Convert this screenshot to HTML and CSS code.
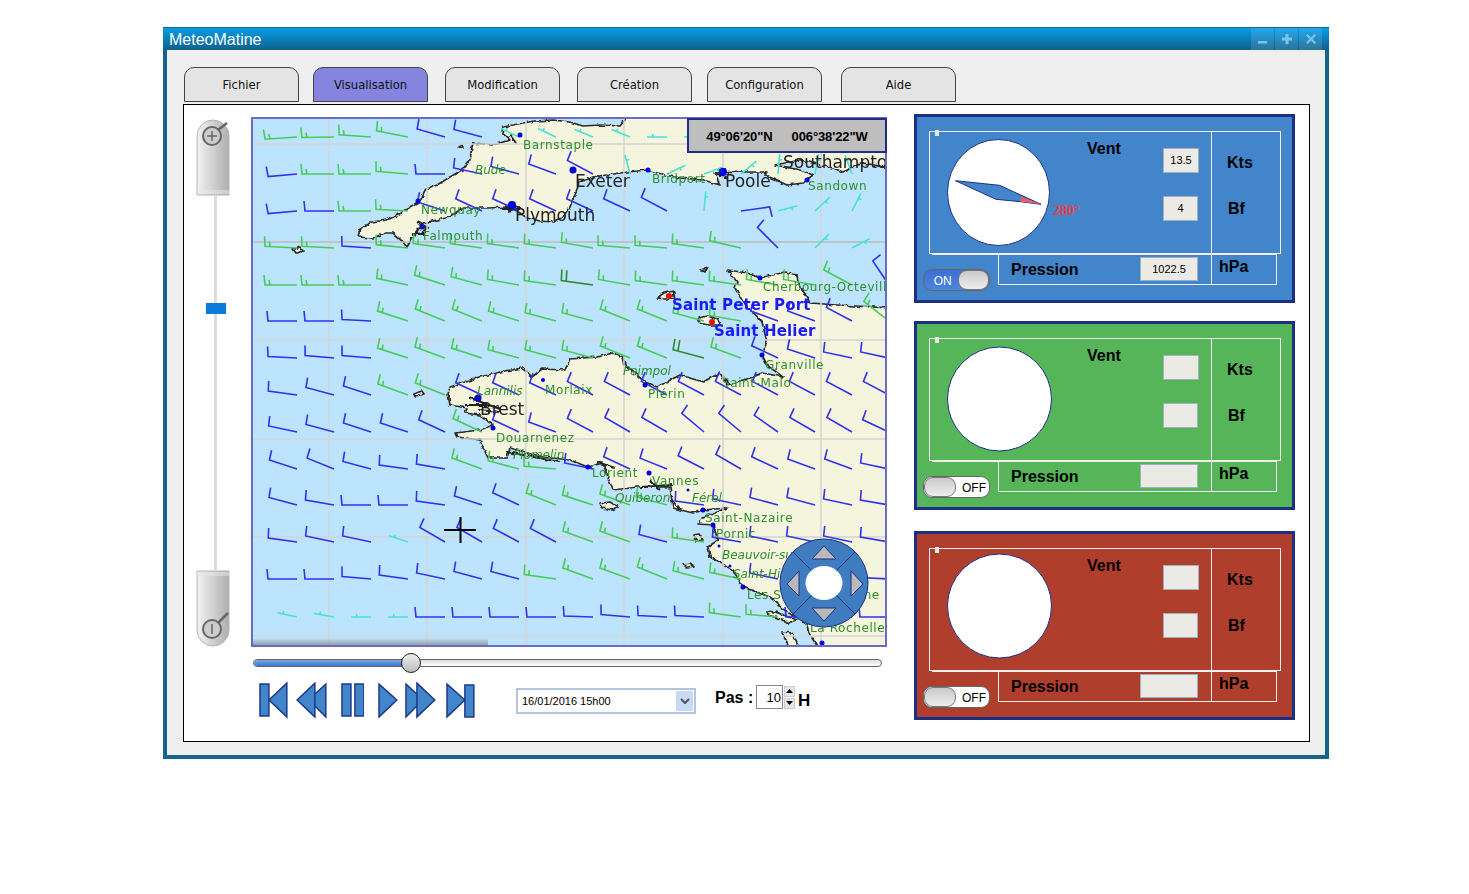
FILE: index.html
```html
<!DOCTYPE html>
<html lang="fr">
<head>
  <meta charset="UTF-8">
  <title>MeteoMatine</title>
  <link rel="stylesheet" href="styles.css">
</head>
<body>
  <div class="window">
    <div class="titlebar">
      <span class="title">MeteoMatine</span>
      <div class="win-buttons">
        <div class="win-btn"><svg width="12" height="12" viewBox="0 0 12 12"><rect x="1" y="8" width="9" height="2.5"/></svg></div>
        <div class="win-btn"><svg width="12" height="12" viewBox="0 0 12 12"><path d="M4.5 1h3v3.5H11v3H7.5V11h-3V7.5H1v-3h3.5z"/></svg></div>
        <div class="win-btn"><svg width="12" height="12" viewBox="0 0 12 12"><path d="M2.5 1L6 4.5 9.5 1 11 2.5 7.5 6 11 9.5 9.5 11 6 7.5 2.5 11 1 9.5 4.5 6 1 2.5z"/></svg></div>
      </div>
    </div>

    <div class="window-body">
      <div class="tabs">
        <div class="tab">Fichier</div>
        <div class="tab tab-active">Visualisation</div>
        <div class="tab">Modification</div>
        <div class="tab">Création</div>
        <div class="tab">Configuration</div>
        <div class="tab">Aide</div>
      </div>

      <div class="panel">
        <!-- zoom slider -->
        <div class="zoom-rail">
          <svg class="zoom-handle" width="34" height="78" viewBox="0 0 34 78">
            <defs>
              <linearGradient id="metal" x1="0" x2="1" y1="0" y2="0">
                <stop offset="0" stop-color="#f2f2f2"/>
                <stop offset="1" stop-color="#aeaeae"/>
              </linearGradient>
            </defs>
            <path d="M1 77V18A16 16 0 0 1 33 18V77Z" fill="url(#metal)" stroke="#b4b4b4"/>
            <path d="M1 73H33M1 75H33" stroke="#e8e8e8"/>
            <circle cx="16" cy="18" r="9" fill="#ccc" stroke="#666" stroke-width="2"/>
            <path d="M22 12L31 5" stroke="#666" stroke-width="2.5"/>
            <path d="M16 13V23M11 18H21" stroke="#666" stroke-width="1.5"/>
          </svg>
          <div class="zoom-track"><div class="zoom-thumb"></div></div>
          <svg class="zoom-handle" width="34" height="78" viewBox="0 0 34 78">
            <path d="M1 1V60A16 16 0 0 0 33 60V1Z" fill="url(#metal)" stroke="#b4b4b4"/>
            <path d="M1 3H33M1 5H33" stroke="#e8e8e8"/>
            <circle cx="16" cy="59" r="9" fill="#ccc" stroke="#666" stroke-width="2"/>
            <path d="M22 53L32 43" stroke="#666" stroke-width="2.5"/>
            <path d="M16 54V64" stroke="#666" stroke-width="1.5"/>
          </svg>
        </div>

        <div class="map-column">
          <div class="map">
            <svg id="mapSvg" width="632" height="526" viewBox="253 119 632 526">
              <defs>
                <linearGradient id="mapShade" x1="0" x2="0" y1="0" y2="1">
                  <stop offset="0" stop-color="#8c8c8c" stop-opacity="0"/>
                  <stop offset="1" stop-color="#8c8c8c" stop-opacity="0.8"/>
                </linearGradient>
                <filter id="rough">
                  <feTurbulence type="fractalNoise" baseFrequency="0.2" numOctaves="2" seed="4"/>
                  <feDisplacementMap in="SourceGraphic" scale="4" xChannelSelector="R" yChannelSelector="G"/>
                </filter>
              </defs>

              <g class="map-image">
                <rect x="253" y="119" width="632" height="526" fill="#bde4ff"/>

                <g class="land" filter="url(#rough)">
                  <path d="M627 115L625 120L620 126L600 125L583 126L570 122L553 120L535 121L523 123L503 127L502 133L510 140L493 145L473 143L471 152L470 160L462 170L450 177L437 185L425 190L420 202L405 210L398 215L387 220L372 222L360 228L358 237L373 238L385 233L393 233L402 241L407 247L413 237L418 230L423 223L437 220L450 217L462 208L487 208L510 207L520 213L527 218L540 221L553 222L565 215L570 207L577 190L579 182L600 176L627 172L648 170L665 175L680 178L703 180L720 185L715 173L743 172L767 172L765 175L787 185L803 183L813 175L800 170L775 165L800 160L833 168L843 172L863 163L890 168L890 115Z"/>
                  <path d="M890 650V308L837 305L810 303L798 282L797 275L785 272L760 278L747 273L728 270L737 282L735 288L743 302L753 312L762 322L767 342L762 355L767 365L783 377L763 373L750 378L727 385L720 373L703 382L680 375L657 387L645 382L625 365L623 357L613 353L597 357L570 359L565 370L542 369L532 377L522 368L500 372L480 377L450 387L448 393L450 405L467 408L465 413L480 415L493 425L480 430L455 433L457 437L480 440L488 458L507 458L510 448L525 452L543 457L570 460L588 467L603 463L608 478L613 490L637 487L670 487L673 508L693 513L703 510L727 508L703 518L698 524L713 525L718 540L708 547L710 557L733 570L743 587L770 597L787 612L805 622L810 635L820 650Z"/>
                  <path d="M657 298L664 293L673 291L675 298L665 299Z"/>
                  <path d="M698 318L708 316L718 320L720 325L708 325L700 323Z"/>
                  <path d="M700 270L707 268L705 271Z"/>
                  <path d="M600 503L610 502L618 507L612 510L602 508Z"/>
                  <path d="M693 535L699 534L703 540L696 541Z"/>
                  <path d="M683 564L690 563L695 567L687 568Z"/>
                  <path d="M767 611L775 612L797 620L790 623L775 617L768 615Z"/>
                  <path d="M782 632L792 633L800 650H790Z"/>
                  <path d="M413 394L422 391L424 394L416 396Z"/>
                  <path d="M293 249L300 247L303 251L296 253Z"/>
                  <path d="M458 147L462 145L463 148Z"/>
                  <path class="coast-marks" d="M505 207L512 203L518 208L508 211M503 209H520M417 222L428 228L420 233M412 234H425M510 135L516 143M715 173L728 178M718 170L726 168M465 405H490M470 398L500 409M478 410L500 412M507 452L560 462M597 462L615 468M640 487L672 485M650 480L660 490M672 500L680 510M722 375L730 385"/>
                </g>

                <g class="grid-lines">
                  <path d="M329 119V645M427 119V645M526 119V645M624 119V645M723 119V645M821 119V645"/>
                  <path d="M253 144H885M253 340H885M253 439H885M253 537H885M253 636H885"/>
                  <path class="grid-strong" d="M253 242H885"/>
                </g>

                <g id="barbs"></g>

                <g class="cities">
                  <circle cx="520" cy="135" r="2.5"/><circle cx="573" cy="170" r="3.5"/><circle cx="512" cy="205" r="4"/>
                  <circle cx="648" cy="170" r="2.5"/><circle cx="723" cy="172" r="4"/><circle cx="807" cy="180" r="2.5"/>
                  <circle cx="760" cy="278" r="2.5"/><circle cx="762" cy="355" r="2.5"/><circle cx="645" cy="385" r="2.5"/>
                  <circle cx="478" cy="398" r="3.5"/><circle cx="543" cy="380" r="2"/><circle cx="493" cy="428" r="2.5"/>
                  <circle cx="588" cy="467" r="2.5"/><circle cx="649" cy="473" r="2.5"/><circle cx="703" cy="510" r="2.5"/>
                  <circle cx="713" cy="525" r="2.5"/><circle cx="743" cy="587" r="2.5"/><circle cx="822" cy="643" r="2.5"/>
                  <circle cx="418" cy="201" r="2.5"/><circle cx="422" cy="227" r="2.5"/><circle cx="688" cy="490" r="1.5"/>
                  <circle cx="719" cy="546" r="1.5"/><circle cx="730" cy="566" r="1.5"/>
                  <circle class="city-red" cx="669" cy="296" r="3"/><circle class="city-red" cx="712" cy="322" r="3"/>
                </g>

                <g class="labels">
                  <text x="523" y="149">Barnstaple</text>
                  <text x="475" y="174" class="italic">Bude</text>
                  <text x="421" y="214">Newquay</text>
                  <text x="423" y="240">Falmouth</text>
                  <text x="652" y="183">Bridport</text>
                  <text x="808" y="190">Sandown</text>
                  <text x="763" y="291">Cherbourg-Octeville</text>
                  <text x="765" y="369">Granville</text>
                  <text x="722" y="387">Saint-Malo</text>
                  <text x="648" y="398">Plérin</text>
                  <text x="623" y="375" class="italic">Paimpol</text>
                  <text x="477" y="395" class="italic">Lannilis</text>
                  <text x="545" y="394">Morlaix</text>
                  <text x="496" y="442">Douarnenez</text>
                  <text x="513" y="459" class="italic">Plomelin</text>
                  <text x="592" y="477">Lorient</text>
                  <text x="652" y="485">Vannes</text>
                  <text x="615" y="502" class="italic">Quiberon</text>
                  <text x="692" y="502" class="italic">Férel</text>
                  <text x="705" y="522">Saint-Nazaire</text>
                  <text x="716" y="538">Pornic</text>
                  <text x="722" y="559" class="italic">Beauvoir-sur-Mer</text>
                  <text x="733" y="578" class="italic">Saint-Hilaire</text>
                  <text x="747" y="599">Les Sables-d'Olonne</text>
                  <text x="810" y="632">La Rochelle</text>
                  <text x="783" y="168" class="big">Southampton</text>
                  <text x="575" y="187" class="big">Exeter</text>
                  <text x="515" y="221" class="big">Plymouth</text>
                  <text x="725" y="187" class="big">Poole</text>
                  <text x="480" y="415" class="big">Brest</text>
                  <text x="672" y="310" class="capital">Saint Peter Port</text>
                  <text x="714" y="336" class="capital">Saint Helier</text>
                </g>

                <rect x="253" y="638" width="235" height="7" fill="url(#mapShade)"/>
              </g>

              <path class="crosshair" d="M460.5 517V543M444 530H476"/>

              <!-- compass -->
              <g class="compass" transform="translate(824 583)">
                <circle r="44"/>
                <path d="M-31 -31L31 31M31 -31L-31 31"/>
                <ellipse class="compass-hub" rx="18.5" ry="17"/>
                <path class="compass-arrow" d="M0 -37L-12 -24H12Z"/>
                <path class="compass-arrow" d="M27 -12L39 1L27 13Z"/>
                <path class="compass-arrow" d="M-25 -12L-37 1L-25 13Z"/>
                <path class="compass-arrow" d="M-12 25H12L0 38Z"/>
              </g>
            </svg>
            <div class="coords"><span>49°06'20"N</span><span>006°38'22"W</span></div>
          </div>

          <div class="time-slider">
            <div class="time-fill"></div>
            <div class="time-knob"></div>
          </div>

          <div class="controls">
            <div class="media">
              <svg width="30" height="37" viewBox="0 0 30 37"><path d="M1 2H10V34H1ZM28 1V35L10 18Z"/></svg>
              <svg width="31" height="37" viewBox="0 0 31 37"><path d="M19 1V35L1 18ZM30 2V35L19 24V12Z"/></svg>
              <svg width="24" height="37" viewBox="0 0 24 37"><path d="M1 2H10V34H1ZM14 2H23V34H14Z"/></svg>
              <svg width="20" height="37" viewBox="0 0 20 37"><path d="M1 2L19 18L1 35Z"/></svg>
              <svg width="31" height="37" viewBox="0 0 31 37"><path d="M1 2L12 12V24L1 35ZM12 1L30 18L12 35Z"/></svg>
              <svg width="29" height="37" viewBox="0 0 29 37"><path d="M1 2L19 18L1 35ZM19 3H28V35H19Z"/></svg>
            </div>

            <div class="date-select">
              <span>16/01/2016 15h00</span>
              <div class="date-arrow"><svg width="10" height="6" viewBox="0 0 10 6"><path d="M1 1L5 5L9 1"/></svg></div>
            </div>

            <div class="step">
              <span class="step-label">Pas :</span>
              <div class="step-input">10</div>
              <div class="spin">
                <div class="spin-btn"><svg width="7" height="4" viewBox="0 0 7 4"><path d="M3.5 0L7 4H0Z"/></svg></div>
                <div class="spin-btn"><svg width="7" height="4" viewBox="0 0 7 4"><path d="M0 0H7L3.5 4Z"/></svg></div>
              </div>
              <span class="step-unit">H</span>
            </div>
          </div>
        </div>

        <!-- station gauges -->
        <div class="gauges">
          <div class="gauge gauge-blue">
            <div class="frame">
              <div class="frame-handle"></div>
              <div class="frame-main">
                <div class="dial">
                  <svg width="105" height="108" viewBox="0 0 105 108">
                    <ellipse cx="51.5" cy="53.5" rx="51" ry="53" fill="#fff" stroke="#1c2f85"/>
                    <path d="M8.5 41.7L52.5 46.3L94 65.3L73.5 62.7L49 60.3Z" fill="#4285cb" stroke="#1c2f85"/>
                    <path d="M74 57.7L94 65.3L73.5 62.7Z" fill="#f25c60"/>
                  </svg>
                  <span class="dial-angle">280°</span>
                </div>
                <div class="readings">
                  <div class="label">Vent</div>
                  <div class="values">
                    <div class="value-box">13.5</div>
                    <div class="value-box value-box-short">4</div>
                  </div>
                </div>
              </div>
              <div class="frame-units">
                <div class="label">Kts</div>
                <div class="label unit-bf">Bf</div>
              </div>
            </div>
            <div class="pressure-row">
              <div class="toggle toggle-on"><span>ON</span><div class="toggle-knob"></div></div>
              <div class="pressure">
                <div class="label pressure-label">Pression</div>
                <div class="value-box value-box-wide">1022.5</div>
                <div class="label pressure-unit">hPa</div>
              </div>
            </div>
          </div>

          <div class="gauge gauge-green">
            <div class="frame">
              <div class="frame-handle"></div>
              <div class="frame-main">
                <div class="dial"><svg width="105" height="108" viewBox="0 0 105 108"><circle cx="52.5" cy="53" r="52" fill="#fff" stroke="#1c2f85"/></svg></div>
                <div class="readings">
                  <div class="label">Vent</div>
                  <div class="values">
                    <div class="value-box"></div>
                    <div class="value-box value-box-short"></div>
                  </div>
                </div>
              </div>
              <div class="frame-units">
                <div class="label">Kts</div>
                <div class="label unit-bf">Bf</div>
              </div>
            </div>
            <div class="pressure-row">
              <div class="toggle"><div class="toggle-knob"></div><span>OFF</span></div>
              <div class="pressure">
                <div class="label pressure-label">Pression</div>
                <div class="value-box value-box-wide"></div>
                <div class="label pressure-unit">hPa</div>
              </div>
            </div>
          </div>

          <div class="gauge gauge-red">
            <div class="frame">
              <div class="frame-handle"></div>
              <div class="frame-main">
                <div class="dial"><svg width="105" height="108" viewBox="0 0 105 108"><circle cx="52.5" cy="53" r="52" fill="#fff" stroke="#1c2f85"/></svg></div>
                <div class="readings">
                  <div class="label">Vent</div>
                  <div class="values">
                    <div class="value-box"></div>
                    <div class="value-box value-box-short"></div>
                  </div>
                </div>
              </div>
              <div class="frame-units">
                <div class="label">Kts</div>
                <div class="label unit-bf">Bf</div>
              </div>
            </div>
            <div class="pressure-row">
              <div class="toggle"><div class="toggle-knob"></div><span>OFF</span></div>
              <div class="pressure">
                <div class="label pressure-label">Pression</div>
                <div class="value-box value-box-wide"></div>
                <div class="label pressure-unit">hPa</div>
              </div>
            </div>
          </div>
        </div>
      </div>
    </div>
  </div>

  <script src="map.js"></script>
</body>
</html>
```

FILE: styles.css
```css
body {
  margin: 0;
  background: #fff;
  font-family: "Liberation Sans", Arial, sans-serif;
}

.window {
  width: 1166px;
  margin: 27px 0 0 163px;
}

/* title bar */
.titlebar {
  display: flex;
  justify-content: space-between;
  height: 23px;
  padding: 0 7px 0 6px;
  box-sizing: border-box;
  background: linear-gradient(#059ce8, #10608c);
  border-top: 1px solid #0f6a98;
}

.title {
  color: #fff;
  font-size: 16px;
  line-height: 23px;
}

.win-buttons {
  display: flex;
  gap: 1px;
}

.win-btn {
  display: flex;
  align-items: center;
  justify-content: center;
  width: 23px;
  height: 22px;
  background: rgba(255, 255, 255, 0.12);
}

.win-btn svg {
  fill: #7cc3ec;
}

/* body */
.window-body {
  height: 709px;
  box-sizing: border-box;
  padding: 17px 0 0 16px;
  background: #efefef;
  border: 4px solid #14648c;
  border-top: none;
}

.tabs {
  display: flex;
  margin-left: 1px;
}

.tab {
  width: 115px;
  height: 35px;
  box-sizing: border-box;
  border: 1px solid #444;
  border-radius: 10px 10px 0 0;
  background: #e4e4e4;
  color: #111;
  font-family: "DejaVu Sans", sans-serif;
  font-size: 11.6px;
  line-height: 35px;
  text-align: center;
}

.tab:nth-child(2) { margin-left: 14px; }
.tab:nth-child(3) { margin-left: 17px; }
.tab:nth-child(4) { margin-left: 17px; }
.tab:nth-child(5) { margin-left: 15px; }
.tab:nth-child(6) { margin-left: 19px; }

.tab-active {
  background: #8585e0;
}

.panel {
  display: flex;
  align-items: flex-start;
  width: 1127px;
  height: 638px;
  box-sizing: border-box;
  margin-top: 2px;
  background: #fff;
  border: 1px solid #000;
}

/* zoom slider */
.zoom-rail {
  position: relative;
  display: flex;
  flex-direction: column;
  align-items: center;
  width: 34px;
  height: 530px;
  margin: 13px 0 0 12px;
}

.zoom-handle {
  flex: none;
  display: block;
}

.zoom-track {
  position: relative;
  flex: 1;
  width: 3px;
  margin-left: 4px;
  background: #dcdcdc;
}

.zoom-thumb {
  position: absolute;
  top: 107px;
  left: -8px;
  width: 20px;
  height: 11px;
  background: #0a7bd8;
}

/* map */
.map-column {
  width: 636px;
  margin: 12px 0 0 21px;
}

.map {
  position: relative;
  height: 530px;
  box-sizing: border-box;
  border: 2px solid #6a6acb;
}

.map svg {
  display: block;
}

.map-image {
  filter: blur(0.4px);
}

.land path {
  fill: #f5f4dc;
  stroke: #2a2a2a;
  stroke-width: 1.7;
  stroke-linejoin: round;
}

.land .coast-marks {
  fill: none;
  stroke: #222;
  stroke-width: 2;
}

.grid-lines path {
  fill: none;
  stroke: #d4d4d4;
  stroke-width: 1.5;
}

.grid-lines .grid-strong {
  stroke: #bbb;
}

#barbs path {
  fill: none;
  stroke-width: 1.6;
}

.barb-b { stroke: #3030f0; }
.barb-g { stroke: #45cc58; }
.barb-c { stroke: #45e3d3; }
.barb-d { stroke: #2c8a2c; }

.cities circle {
  fill: #0000e0;
}

.cities .city-red {
  fill: #e81010;
}

.labels text {
  fill: #2f8f2f;
  font-family: "DejaVu Sans", sans-serif;
  font-size: 12px;
  letter-spacing: 0.6px;
}

.labels .italic {
  font-style: italic;
  letter-spacing: 0;
}

.labels .big {
  fill: #222;
  font-size: 17px;
  letter-spacing: 0;
}

.labels .capital {
  fill: #1a1aff;
  font-size: 15px;
  font-weight: bold;
  letter-spacing: 0.15px;
}

.crosshair {
  fill: none;
  stroke: #000;
  stroke-width: 2;
}

.compass circle {
  fill: #3f7cc0;
  stroke: #1c2f85;
}

.compass path {
  fill: none;
  stroke: #1c2f85;
}

.compass .compass-hub {
  fill: #fff;
}

.compass .compass-arrow {
  fill: #b9b9b9;
}

.coords {
  position: absolute;
  top: -1px;
  right: -2px;
  display: flex;
  gap: 19px;
  justify-content: center;
  width: 200px;
  height: 35px;
  box-sizing: border-box;
  background: #bebebe;
  border: 2px solid #1c2f85;
  font-size: 13px;
  font-weight: bold;
  letter-spacing: -0.1px;
  line-height: 33px;
}

/* time slider */
.time-slider {
  position: relative;
  width: 629px;
  height: 8px;
  box-sizing: border-box;
  margin: 12px 0 0 2px;
  border: 1px solid #666;
  border-radius: 4px;
  background: linear-gradient(#ddd, #fff);
}

.time-fill {
  width: 153px;
  height: 100%;
  border-radius: 3px 0 0 3px;
  background: linear-gradient(#7ea4e0, #3c78cf);
}

.time-knob {
  position: absolute;
  top: -7px;
  left: 147px;
  width: 20px;
  height: 20px;
  box-sizing: border-box;
  border: 1px solid #222;
  border-radius: 50%;
  background: linear-gradient(#eee, #bbb);
}

/* playback row */
.controls {
  display: flex;
  align-items: center;
  height: 37px;
  margin-top: 15px;
}

.media {
  display: flex;
  width: 216px;
  margin-left: 8px;
}

.media svg:nth-child(2) { margin-left: 7px; }
.media svg:nth-child(3) { margin-left: 14px; }
.media svg:nth-child(4) { margin-left: 14px; }
.media svg:nth-child(5) { margin-left: 7px; }
.media svg:nth-child(6) { margin-left: 10px; }

.media path {
  fill: #4285cb;
  stroke: #1c3a8a;
  stroke-width: 1.5;
}

.date-select {
  display: flex;
  align-items: center;
  justify-content: space-between;
  width: 180px;
  height: 26px;
  box-sizing: border-box;
  margin-left: 41px;
  padding: 1px 1px 1px 4px;
  border: 2px solid #b3c5dc;
  background: #fff;
  font-size: 11px;
}

.date-arrow {
  display: flex;
  align-items: center;
  justify-content: center;
  width: 17px;
  height: 100%;
  background: #c9d8f5;
}

.date-arrow path {
  fill: none;
  stroke: #456;
  stroke-width: 2;
}

.step {
  display: flex;
  align-items: center;
  align-self: flex-start;
  height: 24px;
  margin: 3px 0 0 19px;
}

.step-label {
  width: 41px;
  margin-top: 2px;
  font-size: 16px;
  font-weight: bold;
}

.step-input {
  width: 27px;
  height: 24px;
  box-sizing: border-box;
  padding-right: 1px;
  border: 1px solid #888;
  font-size: 13px;
  line-height: 24px;
  text-align: right;
}

.spin {
  display: flex;
  flex-direction: column;
  gap: 1px;
  width: 11px;
  height: 23px;
  margin-left: 1px;
}

.spin-btn {
  display: flex;
  flex: 1;
  align-items: center;
  justify-content: center;
  background: #e6e6e6;
  border: 1px solid #ccc;
}

.step-unit {
  margin: 7px 0 0 3px;
  font-size: 17px;
  font-weight: bold;
}

/* gauges */
.gauges {
  display: flex;
  flex-direction: column;
  gap: 18px;
  margin: 9px 0 0 27px;
}

.gauge {
  width: 381px;
  height: 189px;
  box-sizing: border-box;
  padding: 14px 0 0 12px;
  border: 3px solid #1c2f85;
}

.gauge-blue { background: #4285cb; }
.gauge-green { background: #56b558; }
.gauge-red { background: #b03e2d; margin-top: 3px; }

.gauge-red .dial { margin-top: -3px; }

.frame {
  position: relative;
  display: flex;
  width: 352px;
  height: 123px;
  box-sizing: border-box;
  border: 1px solid #f0f0f0;
}

.frame-handle {
  position: absolute;
  top: -2px;
  left: 5px;
  width: 4px;
  height: 6px;
  background: #e6e6e6;
}

.frame-main {
  display: flex;
  width: 281px;
  box-sizing: border-box;
  padding: 7px 0 0 17px;
}

.frame-units {
  flex: 1;
  box-sizing: border-box;
  padding: 21px 0 0 15px;
  border-left: 1px solid #f0f0f0;
}

.label {
  color: #000;
  font-size: 16px;
  font-weight: bold;
  line-height: 20px;
}

.unit-bf {
  margin: 26px 0 0 1px;
}

.dial {
  position: relative;
  flex: none;
  width: 105px;
  height: 108px;
}

.dial svg {
  display: block;
}

.dial-angle {
  position: absolute;
  top: 64px;
  left: 106px;
  color: #f03c40;
  font-family: "Liberation Serif", serif;
  font-size: 14px;
  font-weight: bold;
}

.readings {
  display: flex;
  margin-left: 35px;
}

.readings .label {
  width: 76px;
}

.values {
  display: flex;
  flex-direction: column;
  gap: 23px;
  margin-top: 9px;
}

.value-box {
  width: 36px;
  height: 25px;
  box-sizing: border-box;
  background: #ebeae4;
  border: 1px solid #9fb0c2;
  font-size: 11px;
  line-height: 23px;
  text-align: center;
}

.value-box-short {
  width: 35px;
}

.value-box-wide {
  flex: none;
  width: 58px;
  height: 24px;
  margin-top: 2px;
}

.pressure-row {
  display: flex;
  align-items: flex-start;
  width: 345px;
  height: 31px;
  box-sizing: border-box;
  margin-left: 3px;
  border-top: 1px solid #f0f0f0;
}

.pressure {
  display: flex;
  width: 279px;
  height: 30px;
  box-sizing: border-box;
  margin-left: 8px;
  border: 1px solid #f0f0f0;
  border-top: none;
}

.pressure-label {
  width: 141px;
  padding: 5px 0 0 12px;
  box-sizing: border-box;
}

.pressure-unit {
  width: 65px;
  margin-left: 13px;
  padding: 2px 0 0 7px;
  box-sizing: border-box;
  border-left: 1px solid #f0f0f0;
}

.toggle {
  display: flex;
  flex: none;
  align-items: center;
  justify-content: space-between;
  width: 67px;
  height: 22px;
  box-sizing: border-box;
  margin: 14px 0 0 -9px;
  border: 1.5px solid #666;
  border-radius: 9px;
  background: #fff;
  font-size: 12px;
  overflow: hidden;
}

.toggle span {
  width: 30px;
  padding-top: 1px;
  text-align: center;
}

.toggle-on {
  background: linear-gradient(#3b6fd6, #4f84dc);
  color: #fff;
}

.toggle-on span {
  margin-left: 4px;
}

.toggle-knob {
  width: 32px;
  height: 20px;
  box-sizing: border-box;
  border: 1px solid #777;
  border-radius: 9px;
  background: linear-gradient(#c9c9c9, #eee);
}
```

FILE: map.js
```js
// wind barbs, one row per latitude. letter = colour/strength, number = rotation in degrees
var rows = [
  [137, "g-4 g-1 g4 g11 b16 b15 c25 c25 c22 c22 c0 c0"],
  [174, "b-5 g0 g0 g5 b0 b12 b15 b20 b28 c75 c155 c160 c140 c95 c100 c70"],
  [211, "b-5 b0 g0 g3 b18 b25 b25 b25 b25 b25 b28 c95 b172 c165 c137 c117"],
  [248, "g3 g3 b4 g6 g8 g8 g8 g8 g10 g5 g5 g8 g13 b45 c135 c152"],
  [285, "g0 g0 g0 g12 g18 g15 g10 g8 d8 g10 g8 g8 g8 g10 g10 g28 b56"],
  [321, "b0 b0 b3 g18 g22 g22 g18 g15 g15 g22 g22 g15 g10 b20 b20 b28 g38"],
  [358, "b3 b5 b5 g18 g20 g18 g15 g15 g15 g22 g22 d15 g20 b25 b18 b12 b12"],
  [395, "b8 b15 b18 g20 g22 b25 b25 b25 b28 b28 b28 b28 b28 b28 b28 b28 b28"],
  [432, "b12 b15 b18 b18 b25 g25 b25 b20 b28 b30 b30 b40 b40 b35 b30 b30 b25"],
  [469, "b18 b22 b15 b8 b10 g20 g15 g5 b12 b25 b22 b27 b30 b25 b20 b20 b12"],
  [505, "b15 b10 b0 b0 b8 b18 b25 g22 g18 g20 g15 b8 b12 b15 b15 b12 b10"],
  [542, "b8 b12 b12 c18 b30 b30 b28 b28 g20 g20 b15 g8 b10 b12 b12 b12 b10"],
  [579, "b0 b0 b5 b8 b12 b15 b15 g8 g20 g20 g22 g15 g12 b12 b10 b10 b3"],
  [617, "c12 c10 c0 c0 b0 b0 b0 b0 b2 b5 b3 b3 g8 g5 b0 b0 b0"]
];

var shapes = {
  b: "M0 0H-29L-30 -10",
  g: "M0 0H-32L-33 -10M-27 0L-28 -5",
  c: "M0 0H-20M-14 0L-14.5 -3",
  d: "M0 0H-32L-33 -11M-27 0L-28 -11"
};

var barbs = document.getElementById("barbs");

rows.forEach(function (row) {
  row[1].split(" ").forEach(function (cell, i) {
    var kind = cell.charAt(0);
    var angle = parseFloat(cell.slice(1));
    var path = document.createElementNS("http://www.w3.org/2000/svg", "path");
    path.setAttribute("d", shapes[kind]);
    path.setAttribute("class", "barb-" + kind);
    path.setAttribute("transform", "translate(" + (297 + 37 * i) + " " + row[0] + ") rotate(" + angle + ")");
    barbs.appendChild(path);
  });
});
```
